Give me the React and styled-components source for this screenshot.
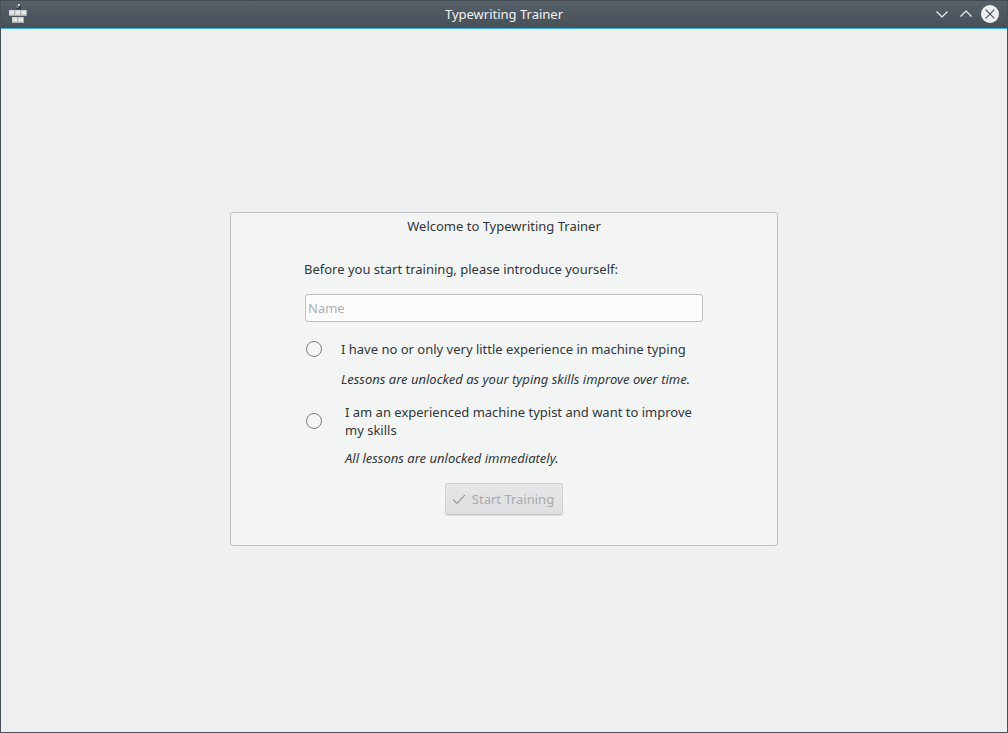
import React, { useState } from "react";
import styled, { createGlobalStyle } from "styled-components";

const GlobalStyle = createGlobalStyle`
  *, *::before, *::after { box-sizing: border-box; }
  body { margin: 0; }
  body, input, button {
    font-family: "Noto Sans", sans-serif;
    font-size: 13px;
    line-height: 18px;
    color: #31363b;
  }
`;

const Window = styled.div`
  display: flex;
  flex-direction: column;
  min-height: 100vh;
  border: 1px solid #475057;
  border-top-color: #434b52;
  background: #eef0f0;
`;

const TitleBar = styled.header`
  display: grid;
  grid-template-columns: 1fr auto 1fr;
  align-items: center;
  height: 28px;
  padding: 0 8px 1px;
  color: #eff0f1;
  background: linear-gradient(#566069, #475057);
  border-bottom: 1px solid #3daee9;
`;

const WindowTitle = styled.h1`
  margin: 0;
  font-size: 13px;
  font-weight: 400;
`;

const WindowControls = styled.div`
  display: flex;
  justify-content: flex-end;
  gap: 6px;
`;

const ControlButton = styled.button`
  display: flex;
  width: 18px;
  height: 18px;
  padding: 0;
  border: 0;
  background: none;
  color: inherit;
`;

const Content = styled.main`
  flex: 1;
  display: flex;
  align-items: center;
  justify-content: center;
  padding-bottom: 3px;
`;

const Panel = styled.form`
  display: flex;
  flex-direction: column;
  align-items: center;
  width: 548px;
  max-width: 100%;
  padding: 4px 16px 30px;
  border: 1px solid #bdc0c0;
  border-radius: 3px;
  background: #f3f5f4;
`;

const PanelTitle = styled.h2`
  margin: 0 0 25px;
  font-size: 13px;
  font-weight: 400;
`;

const Fields = styled.div`
  display: flex;
  flex-direction: column;
  width: 400px;
  max-width: 100%;
  margin-bottom: 16px;
`;

const NameField = styled.div`
  display: flex;
  flex-direction: column;
  gap: 16px;
  margin-bottom: 18px;
`;

const NameInput = styled.input`
  height: 28px;
  margin: 0 1px;
  padding: 0 2px;
  border: 1px solid #bdbfc0;
  border-radius: 3px;
  background: #fcfcfc;
  outline: none;
  &::placeholder { color: #adafb0; opacity: 1; }
  &:focus { border-color: #3daee9; }
`;

const Options = styled.div`
  display: flex;
  flex-direction: column;
  gap: 15px;
`;

const Option = styled.div`
  display: grid;
  grid-template-columns: 16px 1fr;
  column-gap: ${(p) => p.$gap}px;
  row-gap: ${(p) => p.$spacing}px;
  align-items: center;
  padding-left: 2px;
`;

const Radio = styled.input`
  appearance: none;
  width: 16px;
  height: 16px;
  margin: 0;
  border: 1px solid #7b7f82;
  border-radius: 50%;
  background: #f5f6f6;
  &:checked {
    border-color: #3daee9;
    background: radial-gradient(#3daee9 4px, #f5f6f6 5px);
  }
`;

const Hint = styled.p`
  grid-column: 2;
  margin: 0;
  font-style: italic;
`;

const StartButton = styled.button`
  display: flex;
  align-items: center;
  gap: 4px;
  height: 32px;
  padding: 0 8px 0 6px;
  border: 1px solid #cfd1d2;
  border-bottom-color: #c5c7c8;
  border-radius: 3px;
  background: linear-gradient(#e6e7e8, #dedfe0);
  box-shadow: 0 1px 0 #dcdedf;
  &:disabled { color: #a8aaac; }
`;

const KEYS = [
  [0, 6],
  [6, 6],
  [12, 6],
  [3, 13],
  [9, 13],
];

function KeysIcon() {
  return (
    <svg width="20" height="20" viewBox="0 0 20 20" aria-hidden="true">
      <path d="M7 1h5v4H7z" fill="#333c41" />
      <path d="M7 1h3v3H7z" fill="#626d6e" />
      <path d="M9 0h2v2H9z" fill="#c3d6d3" />
      {KEYS.map(([x, y]) => (
        <g key={`${x}-${y}`}>
          <path d={`M${x} ${y}h6v6h-6z`} fill="#adaeae" />
          <path d={`M${x} ${y}h5v5h-5z`} fill="#cfd0d0" />
          <path d={`M${x + 1} ${y + 1}h4v3h-4z`} fill="#e6e6e6" />
        </g>
      ))}
    </svg>
  );
}

const Chevron = ({ d }) => (
  <svg width="18" height="18" viewBox="0 0 18 18" fill="none" stroke="currentColor" strokeWidth="1.2" aria-hidden="true">
    <path d={d} />
  </svg>
);

const CloseIcon = () => (
  <svg width="18" height="18" viewBox="0 0 18 18" aria-hidden="true">
    <circle cx="9" cy="9" r="9" fill="#eff0f1" />
    <path d="M4.7 4.7l8.6 8.6M13.3 4.7l-8.6 8.6" stroke="#475057" strokeWidth="1.2" />
  </svg>
);

const CheckIcon = () => (
  <svg width="16" height="16" viewBox="0 0 16 16" fill="none" stroke="#96999b" strokeWidth="1.2" aria-hidden="true">
    <path d="M1.3 8.5l3.7 3.8L13 3.8" />
  </svg>
);

const LEVELS = [
  {
    id: "beginner",
    label: "I have no or only very little experience in machine typing",
    hint: "Lessons are unlocked as your typing skills improve over time.",
    gap: 19,
    spacing: 12,
  },
  {
    id: "expert",
    label: "I am an experienced machine typist and want to improve my skills",
    hint: "All lessons are unlocked immediately.",
    gap: 23,
    spacing: 10,
  },
];

export default function App() {
  const [name, setName] = useState("");
  const [level, setLevel] = useState("");

  return (
    <>
      <GlobalStyle />
      <Window>
        <TitleBar>
          <KeysIcon />
          <WindowTitle>Typewriting Trainer</WindowTitle>
          <WindowControls>
            <ControlButton type="button" aria-label="Minimize">
              <Chevron d="M3.5 6.5L9 12l5.5-5.5" />
            </ControlButton>
            <ControlButton type="button" aria-label="Maximize">
              <Chevron d="M3.5 11.5L9 6l5.5 5.5" />
            </ControlButton>
            <ControlButton type="button" aria-label="Close">
              <CloseIcon />
            </ControlButton>
          </WindowControls>
        </TitleBar>
        <Content>
          <Panel onSubmit={(e) => e.preventDefault()}>
            <PanelTitle>Welcome to Typewriting Trainer</PanelTitle>
            <Fields>
              <NameField>
                <label htmlFor="name">Before you start training, please introduce yourself:</label>
                <NameInput
                  id="name"
                  type="text"
                  placeholder="Name"
                  value={name}
                  onChange={(e) => setName(e.target.value)}
                />
              </NameField>
              <Options role="radiogroup">
                {LEVELS.map((item) => (
                  <Option key={item.id} $gap={item.gap} $spacing={item.spacing}>
                    <Radio
                      type="radio"
                      name="level"
                      id={item.id}
                      checked={level === item.id}
                      onChange={() => setLevel(item.id)}
                    />
                    <label htmlFor={item.id}>{item.label}</label>
                    <Hint>{item.hint}</Hint>
                  </Option>
                ))}
              </Options>
            </Fields>
            <StartButton type="submit" disabled={!name || !level}>
              <CheckIcon />
              Start Training
            </StartButton>
          </Panel>
        </Content>
      </Window>
    </>
  );
}
